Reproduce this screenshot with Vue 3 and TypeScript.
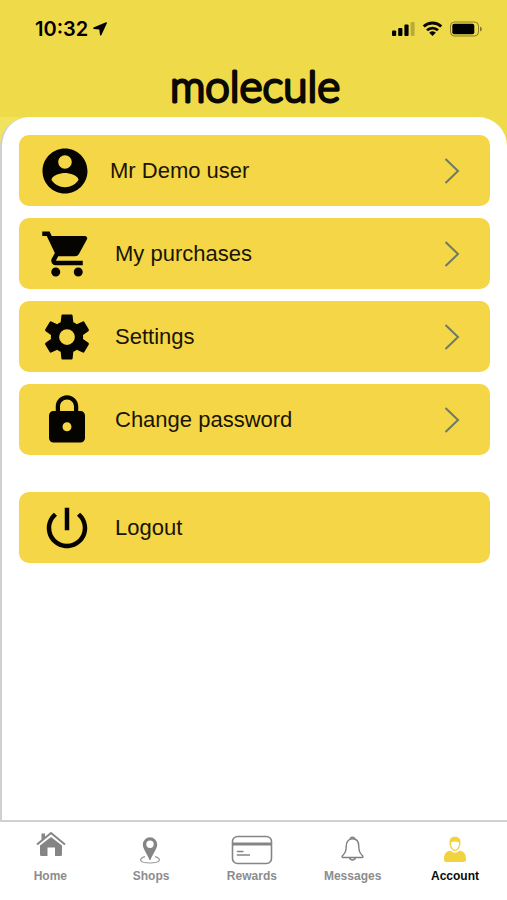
<script setup lang="ts">
import { ref } from 'vue'

interface MenuItem {
  id: string
  label: string
  path: string
  arrow: boolean
}

interface Tab {
  id: string
  label: string
}

const menu: MenuItem[] = [
  {
    id: 'profile',
    label: 'Mr Demo user',
    path: 'M12 2C6.48 2 2 6.48 2 12s4.48 10 10 10 10-4.48 10-10S17.52 2 12 2zm0 3c1.66 0 3 1.34 3 3s-1.34 3-3 3-3-1.34-3-3 1.34-3 3-3zm0 14.2c-2.5 0-4.71-1.28-6-3.22.03-1.99 4-3.08 6-3.08 1.99 0 5.97 1.09 6 3.08-1.29 1.94-3.5 3.22-6 3.22z',
    arrow: true,
  },
  {
    id: 'purchases',
    label: 'My purchases',
    path: 'M7 18c-1.1 0-1.99.9-1.99 2S5.9 22 7 22s2-.9 2-2-.9-2-2-2zM1 2v2h2l3.6 7.59-1.35 2.45c-.16.28-.25.61-.25.96 0 1.1.9 2 2 2h12v-2H7.42c-.14 0-.25-.11-.25-.25l.03-.12.9-1.63h7.45c.75 0 1.41-.41 1.75-1.03l3.58-6.49c.08-.14.12-.31.12-.48 0-.55-.45-1-1-1H5.21l-.94-2H1zm16 16c-1.1 0-1.99.9-1.99 2s.89 2 1.99 2 2-.9 2-2-.9-2-2-2z',
    arrow: true,
  },
  {
    id: 'settings',
    label: 'Settings',
    path: 'M10 2H14Q14.4 2 14.5 2.5L14.8 5.4Q15.6 5.7 16.32 6.28L19 5.1Q19.460 4.920 19.700 5.300L21.700 8.700Q21.860 9.080 21.500 9.400L19.120 11.120Q19.200 12 19.120 12.880L21.500 14.600Q21.860 14.920 21.700 15.300L19.700 18.700Q19.460 19.080 19 18.900L16.320 17.720Q15.600 18.300 14.800 18.600L14.500 21.500Q14.400 22 14 22H10Q9.600 22 9.500 21.500L9.200 18.600Q8.400 18.300 7.680 17.720L5 18.900Q4.540 19.080 4.300 18.700L2.300 15.300Q2.140 14.920 2.500 14.600L4.880 12.880Q4.800 12 4.880 11.120L2.500 9.400Q2.140 9.080 2.300 8.700L4.300 5.300Q4.540 4.920 5 5.100L7.680 6.280Q8.400 5.700 9.200 5.400L9.500 2.500Q9.600 2 10 2ZM12 8.500A3.500 3.500 0 1 0 12 15.500A3.500 3.500 0 1 0 12 8.500Z',
    arrow: true,
  },
  {
    id: 'password',
    label: 'Change password',
    path: 'M18 8h-1V6c0-2.76-2.24-5-5-5S7 3.24 7 6v2H6c-1.1 0-2 .9-2 2v10c0 1.1.9 2 2 2h12c1.1 0 2-.9 2-2V10c0-1.1-.9-2-2-2zm-6 9c-1.1 0-2-.9-2-2s.9-2 2-2 2 .9 2 2-.9 2-2 2zm3.1-9H8.9V6c0-1.71 1.39-3.1 3.1-3.1 1.71 0 3.1 1.39 3.1 3.1v2z',
    arrow: true,
  },
  {
    id: 'logout',
    label: 'Logout',
    path: 'M13 3h-2v10h2V3zm4.83 2.17l-1.42 1.42C17.99 7.86 19 9.81 19 12c0 3.87-3.13 7-7 7s-7-3.13-7-7c0-2.19 1.01-4.14 2.58-5.42L6.17 5.17C4.23 6.82 3 9.26 3 12c0 4.97 4.03 9 9 9s9-4.03 9-9c0-2.74-1.23-5.18-3.17-6.83z',
    arrow: false,
  },
]

const tabs: Tab[] = [
  { id: 'home', label: 'Home' },
  { id: 'shops', label: 'Shops' },
  { id: 'rewards', label: 'Rewards' },
  { id: 'messages', label: 'Messages' },
  { id: 'account', label: 'Account' },
]

const active = ref('account')
</script>

<template>
  <div class="screen">
    <header class="top">
      <div class="status">
        <span class="time">10:32</span>
        <svg class="locate" width="14" height="14" viewBox="0 0 14 14" aria-hidden="true">
          <path d="M13 .3 L.5 5.600 Q-.2 6.600 .9 7 L6.300 7.600 L7 13 Q7.400 14 8.300 13.200 L13.900 1.200 Q14 .1 13 .3Z" />
        </svg>
        <svg class="signals" width="90" height="16" viewBox="0 0 90 16" aria-hidden="true">
          <rect x="0" y="9.500" width="4.200" height="5.500" rx="1" />
          <rect x="6.200" y="7" width="4.200" height="8" rx="1" />
          <rect x="12.400" y="3.500" width="4.200" height="11.500" rx="1" />
          <rect x="18.600" y="1" width="4" height="14" rx="1" opacity=".22" />
          <g fill="none" stroke="#0b0a02" stroke-width="2.900">
            <path d="M31.700 5.500 A13 13 0 0 1 49.300 5.500" />
            <path d="M35 9.300 A8 8 0 0 1 46 9.300" />
          </g>
          <path d="M37.200 11.800 A5 5 0 0 1 43.800 11.800 L40.500 15Z" />
          <rect x="58.500" y="1" width="28" height="14" rx="4" fill="none" stroke="#0b0a02" stroke-opacity=".45" />
          <rect x="60.300" y="2.800" width="22" height="10.500" rx="2" />
          <path d="M88 5.500 Q90 6.500 90 8 T88 10.500Z" opacity=".45" />
        </svg>
      </div>
      <h1 class="brand">
        <svg width="200" height="64" viewBox="0 0 200 64">
          <text x="101" y="49" text-anchor="middle">molecule</text>
        </svg>
      </h1>
    </header>

    <div class="backdrop">
      <main class="panel">
        <button
          v-for="item in menu"
          :key="item.id"
          type="button"
          class="row"
          :class="item.id"
        >
          <svg class="glyph" viewBox="0 0 24 24" aria-hidden="true"><path :d="item.path" fill-rule="evenodd" /></svg>
          <span class="label">{{ item.label }}</span>
          <svg v-if="item.arrow" class="chevron" width="16" height="28" viewBox="0 0 16 28" aria-hidden="true">
            <path d="M1.500 2 L14 14 L1.500 26" />
          </svg>
        </button>
      </main>
    </div>

    <nav class="tabs">
      <a
        v-for="tab in tabs"
        :key="tab.id"
        :href="'#' + tab.id"
        class="tab"
        :class="{ active: tab.id === active }"
        @click.prevent="active = tab.id"
      >
        <svg width="44" height="34" viewBox="0 0 44 34" aria-hidden="true">
          <g v-if="tab.id === 'home'" fill="#858585">
            <path d="M13.500 9V2.500h3.500V6Z" />
            <path d="M9 13.500 L23 2 L37 13.500" fill="none" stroke="#858585" stroke-width="2" />
            <path d="M12 14.500 L23 6 L34 14.500 V23.500 Q34 25 32.500 25 H27 V16.500 H19.500 V25 H13.500 Q12 25 12 23.500Z" />
          </g>
          <g v-else-if="tab.id === 'shops'">
            <path d="M16 25.700 C9 27.500 10 32 21 32 S33 27.500 26 25.700" fill="none" stroke="#9a9a9a" stroke-width="1.200" />
            <path fill="#858585" fill-rule="evenodd" d="M21 6.300 A7.200 7.200 0 0 0 13.800 13.500 C13.800 18 18.500 23 20.500 29 H21.500 C23.500 23 28.200 18 28.200 13.500 A7.200 7.200 0 0 0 21 6.300Z M21 9.600 A3.700 3.700 0 1 1 21 17 A3.700 3.700 0 1 1 21 9.600Z" />
          </g>
          <g v-else-if="tab.id === 'rewards'" fill="none" stroke="#858585" stroke-width="1.600">
            <rect x="2.500" y="5.500" width="39" height="27" rx="5" />
            <path d="M2.500 13H41.500" stroke-width="2.800" />
            <path d="M6.800 20.500H13.500M6.800 24H20" />
          </g>
          <g v-else-if="tab.id === 'messages'" fill="none" stroke="#808080" stroke-width="1.400">
            <path d="M19.300 8.300 A2.200 2.200 0 1 1 23.700 8.300" />
            <path d="M21.500 7.800 C17 7.800 15.200 11.500 15.200 15.500 C15.200 20.500 14 22 11.300 25 Q10.600 26.500 12 26.500 H31 Q32.400 26.500 31.700 25 C29 22 27.800 20.500 27.800 15.500 C27.800 11.500 26 7.800 21.500 7.800Z" />
            <path d="M18.600 26.700 A3 3 0 0 0 24.400 26.700" />
          </g>
          <g v-else fill="#f1d23f">
            <path d="M16.600 13 C16 8 18 5.700 22 5.700 S28 8 27.400 13 C27 17 24.800 20 22 20 S17 17 16.600 13Z" />
            <path d="M18 11.500 Q22 9.700 26 11.500 C26 16 24.200 18.700 22 18.700 S18 16 18 11.500Z" fill="#fff" />
            <path d="M17.500 19.500 Q22 24 26.500 19.500 C31 20.500 33 22.500 33 28.500 Q33 31 30.500 31 H13.500 Q11 31 11 28.500 C11 22.500 13 20.500 17.500 19.500Z" />
          </g>
        </svg>
        <span class="caption">{{ tab.label }}</span>
      </a>
    </nav>
  </div>
</template>

<style>
body {
  margin: 0;
  background: #fff;
}
</style>

<style scoped>
.screen {
  display: flex;
  flex-direction: column;
  min-height: 100vh;
  font-family: "Liberation Sans", Arial, sans-serif;
}

.top {
  background: #efdb49;
}

.status {
  display: flex;
  align-items: center;
  height: 16px;
  padding: 21px 25px 0 35px;
}

.time {
  font: 600 20px/16px Inter, sans-serif;
}

.locate {
  margin-left: 5px;
}

.signals {
  margin-left: auto;
}

.brand {
  display: flex;
  justify-content: center;
  margin: 0;
  padding: 16px 0 0;
}

.brand text {
  font: 300 44px Lato, sans-serif;
  fill: #0b0a02;
  stroke: #0b0a02;
  stroke-width: 3px;
  stroke-linejoin: round;
}

.backdrop {
  display: flex;
  flex: 1;
  background: linear-gradient(to right, #f2e35e 14px, #efdb49 28px);
}

.panel {
  display: flex;
  flex: 1;
  flex-direction: column;
  gap: 12px;
  padding: 18px 17px 18px;
  border-left: 2px solid #d0d0d0;
  border-bottom: 2px solid #d0d0d0;
  border-radius: 29px 29px 0 0;
  background: #fff;
}

.row {
  display: flex;
  align-items: center;
  gap: 21px;
  height: 71px;
  padding: 0 30px 0 21px;
  border: 0;
  border-radius: 10px;
  background: #f4d647;
  color: #1a1403;
  font: 22px/28px "Liberation Sans", Arial, sans-serif;
  text-align: left;
  cursor: pointer;
}

.profile {
  gap: 18px;
  padding-left: 19px;
}

.logout {
  margin-top: 25px;
}

.glyph {
  flex: none;
  width: 54px;
  height: 54px;
  fill: #050400;
}

.label {
  flex: 1;
}

.chevron {
  flex: none;
  fill: none;
  stroke: #6d7b66;
  stroke-width: 2;
}

.tabs {
  display: grid;
  grid-template-columns: repeat(4, 1fr) 104px;
  padding: 9px 0 16px;
  background: #fff;
}

.tab {
  display: flex;
  flex-direction: column;
  align-items: center;
  gap: 3px;
  color: #8c8c8c;
  font-size: 12px;
  font-weight: 700;
  line-height: 16px;
  text-decoration: none;
}

.active {
  color: #0a0a0a;
}
</style>
